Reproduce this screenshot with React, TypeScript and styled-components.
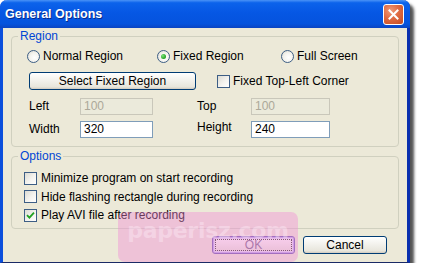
import React from 'react';
import styled, { createGlobalStyle } from 'styled-components';

const GlobalStyle = createGlobalStyle`
  html, body {
    margin: 0;
    padding: 0;
    background: #ffffff;
  }
  body {
    font-family: 'Liberation Sans', Arial, sans-serif;
    font-size: 12px;
    color: #000000;
  }
`;

const Frame = styled.div`
  position: relative;
  box-sizing: border-box;
  width: 410px;
  height: 263px;
  background: #ece9d8;
  border-left: 3px solid #0b4fdc;
  border-right: 3px solid #0a2fae;
  border-bottom: 1px solid #1a2a66;
  border-radius: 7px 7px 0 0;
  box-shadow: 4px 4px 3px rgba(40, 40, 40, 0.8);
  display: flex;
  flex-direction: column;
`;

const TitleBar = styled.div`
  height: 28px;
  margin: 0 -3px;
  padding: 0 6px 0 5px;
  border-radius: 7px 7px 0 0;
  background: linear-gradient(
    #4a93f7 0%,
    #0c63eb 10%,
    #0657e4 45%,
    #0553dd 85%,
    #0b44c2 100%
  );
  display: flex;
  align-items: center;
  justify-content: space-between;
`;

const Title = styled.span`
  color: #ffffff;
  font-weight: bold;
  font-size: 12.5px;
  text-shadow: 1px 1px 0 #0a2c8a;
`;

const CloseButton = styled.div`
  box-sizing: border-box;
  width: 21px;
  height: 21px;
  border: 1px solid #ffffff;
  border-radius: 3px;
  background: radial-gradient(circle at 35% 30%, #f09a78 0%, #df6a42 45%, #c44a20 100%);
  display: flex;
  align-items: center;
  justify-content: center;
`;

const Body = styled.div`
  flex: 1;
  display: flex;
  flex-direction: column;
  padding: 1px 8px 0 8px;
`;

const Group = styled.fieldset<{ $top: number }>`
  margin: ${p => p.$top}px 0 0 0;
  padding: 0;
  border: 1px solid #d0d0bf;
  border-radius: 4px;
  min-width: 0;
`;

const Legend = styled.legend`
  margin-left: 6px;
  padding: 0 2px;
  color: #0046d5;
  font-size: 12px;
  line-height: 14px;
`;

const RegionContent = styled.div`
  display: flex;
  flex-direction: column;
  padding: 5px 0 8px 15px;
`;

const RadioRow = styled.div`
  display: grid;
  grid-template-columns: 130px 124px auto;
  height: 16px;
  align-items: center;
`;

const Choice = styled.label`
  display: flex;
  align-items: center;
  gap: 3px;
  white-space: nowrap;
  line-height: 16px;
`;

const RadioCircle = styled.span<{ $checked?: boolean }>`
  box-sizing: border-box;
  width: 13px;
  height: 13px;
  border-radius: 50%;
  border: 1px solid #3d5e85;
  background: radial-gradient(circle at 60% 60%, #ffffff 0%, #f4f3ee 50%, #d6d4ca 100%);
  display: flex;
  align-items: center;
  justify-content: center;

  &::after {
    content: '';
    display: ${p => (p.$checked ? 'block' : 'none')};
    width: 5px;
    height: 5px;
    border-radius: 50%;
    background: radial-gradient(circle at 35% 35%, #7be27b 0%, #21a121 70%);
  }
`;

const Check = styled.span`
  box-sizing: border-box;
  width: 13px;
  height: 13px;
  border: 1px solid #3d5e85;
  background: linear-gradient(135deg, #dcdbd3 0%, #f4f3ef 55%, #ffffff 100%);
  display: flex;
  align-items: center;
  justify-content: center;
`;

const ActionRow = styled.div`
  display: flex;
  align-items: center;
  margin-top: 8px;
  padding-left: 2px;
  gap: 21px;
`;

const PushButton = styled.button<{ $width: number; $default?: boolean }>`
  box-sizing: border-box;
  width: ${p => p.$width}px;
  height: 18px;
  padding: 0;
  font-family: inherit;
  font-size: 12px;
  color: ${p => (p.$default ? '#7a6a8a' : '#000000')};
  border: 1px solid ${p => (p.$default ? '#6a5ab0' : '#003c74')};
  border-radius: 3px;
  background: linear-gradient(#ffffff 0%, #f4f3ee 40%, #e8e6dc 85%, #d6d0c5 100%);
  box-shadow: ${p =>
    p.$default
      ? 'inset 0 0 0 1px #b9a9ec, inset 0 0 0 2px #e2dcf7'
      : 'inset 0 -1px 0 #d6d0c5'};
  outline: ${p => (p.$default ? '1px dotted #333333' : 'none')};
  outline-offset: -4px;
`;

const FieldGrid = styled.div`
  display: grid;
  grid-template-columns: 51px 117px 54px 79px;
  grid-auto-rows: 17px;
  row-gap: 6px;
  margin-top: 8px;
  padding-left: 2px;
  align-items: center;
`;

const FieldLabel = styled.span<{ $shift?: number }>`
  line-height: 17px;
  position: relative;
  top: ${p => p.$shift ?? 0}px;
`;

const TextBox = styled.div<{ $width: number; $disabled?: boolean }>`
  box-sizing: border-box;
  width: ${p => p.$width}px;
  height: 17px;
  padding: 0 3px;
  border: 1px solid ${p => (p.$disabled ? '#c9c7ba' : '#7f9db9')};
  background: ${p => (p.$disabled ? '#ebeadb' : '#ffffff')};
  color: ${p => (p.$disabled ? '#aca899' : '#000000')};
  line-height: 15px;
`;

const OptionsContent = styled.div`
  display: flex;
  flex-direction: column;
  gap: 2.5px;
  padding: 7px 0 5px 12px;
`;

const OptionRow = styled.label`
  display: flex;
  align-items: center;
  gap: 4px;
  height: 16px;
`;

const ButtonBar = styled.div`
  display: flex;
  justify-content: flex-end;
  gap: 8px;
  margin-top: 7px;
  padding-right: 12px;
`;

const Watermark = styled.div`
  position: absolute;
  left: 115px;
  top: 212px;
  width: 180px;
  height: 50px;
  border-radius: 7px;
  background: rgba(240, 140, 215, 0.42);
  pointer-events: none;
  display: flex;
  justify-content: center;
`;

const WatermarkText = styled.span`
  margin-top: 6px;
  font-family: 'DejaVu Sans', sans-serif;
  font-size: 22px;
  line-height: 26px;
  font-weight: bold;
  letter-spacing: -0.3px;
  color: rgba(255, 240, 250, 0.4);
`;

const CheckMark = () => (
  <svg width="9" height="9" viewBox="0 0 9 9">
    <path d="M1 4.2 L3.4 6.6 L8 1.6" stroke="#21a121" strokeWidth="1.8" fill="none" />
  </svg>
);

const CloseGlyph = () => (
  <svg width="11" height="11" viewBox="0 0 11 11">
    <path d="M1.5 1.5 L9.5 9.5 M9.5 1.5 L1.5 9.5" stroke="#ffffff" strokeWidth="2" strokeLinecap="square" />
  </svg>
);

const options = [
  { label: 'Minimize program on start recording', checked: false },
  { label: 'Hide flashing rectangle during recording', checked: false },
  { label: 'Play AVI file after recording', checked: true },
];

export default function App() {
  return (
    <>
      <GlobalStyle />
      <Frame>
        <TitleBar>
          <Title>General Options</Title>
          <CloseButton>
            <CloseGlyph />
          </CloseButton>
        </TitleBar>
        <Body>
          <Group $top={0}>
            <Legend>Region</Legend>
            <RegionContent>
              <RadioRow>
                <Choice>
                  <RadioCircle />
                  Normal Region
                </Choice>
                <Choice>
                  <RadioCircle $checked />
                  Fixed Region
                </Choice>
                <Choice>
                  <RadioCircle />
                  Full Screen
                </Choice>
              </RadioRow>
              <ActionRow>
                <PushButton $width={167}>Select Fixed Region</PushButton>
                <Choice>
                  <Check />
                  Fixed Top-Left Corner
                </Choice>
              </ActionRow>
              <FieldGrid>
                <FieldLabel>Left</FieldLabel>
                <TextBox $width={73} $disabled>100</TextBox>
                <FieldLabel>Top</FieldLabel>
                <TextBox $width={79} $disabled>100</TextBox>
                <FieldLabel>Width</FieldLabel>
                <TextBox $width={73}>320</TextBox>
                <FieldLabel $shift={-2}>Height</FieldLabel>
                <TextBox $width={79}>240</TextBox>
              </FieldGrid>
            </RegionContent>
          </Group>
          <Group $top={2}>
            <Legend>Options</Legend>
            <OptionsContent>
              {options.map(o => (
                <OptionRow key={o.label}>
                  <Check>{o.checked && <CheckMark />}</Check>
                  {o.label}
                </OptionRow>
              ))}
            </OptionsContent>
          </Group>
          <ButtonBar>
            <PushButton $width={83} $default>OK</PushButton>
            <PushButton $width={84}>Cancel</PushButton>
          </ButtonBar>
        </Body>
        <Watermark>
          <WatermarkText>paperisz.com</WatermarkText>
        </Watermark>
      </Frame>
    </>
  );
}
